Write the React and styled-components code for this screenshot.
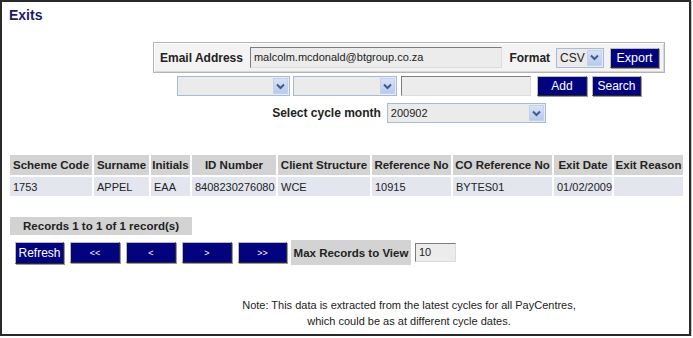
import styled, { createGlobalStyle } from "styled-components";

const GlobalStyle = createGlobalStyle`
  html, body {
    margin: 0;
    padding: 0;
    background: #ffffff;
    font-family: "Liberation Sans", Arial, sans-serif;
  }
`;

const Frame = styled.div`
  width: 687px;
  height: 332px;
  border: 2px solid #2a2a2a;
  background: #ffffff;
  box-shadow: 1px 1px 0 #c8c8c8;
  overflow: hidden;
`;

const Title = styled.h1`
  margin: 0;
  padding: 5px 7px 0;
  font-size: 14px;
  line-height: 16px;
  font-weight: bold;
  color: #1d1a6e;
`;

const FormArea = styled.div`
  margin: 19px 0 0 151px;
  width: 512px;
  display: flex;
  flex-direction: column;
  align-items: center;
`;

const EmailPanel = styled.div`
  box-sizing: border-box;
  width: 512px;
  height: 31px;
  display: flex;
  align-items: center;
  padding: 0 5px 0 6px;
  background: #f3f3f3;
  border: 1px solid #b4b4b4;
  box-shadow: inset 1px 1px 0 #ffffff, inset -1px -1px 0 #d8d8d8;
`;

const Label = styled.span`
  font-size: 12px;
  font-weight: bold;
  color: #222;
  white-space: nowrap;
  margin-right: ${(p) => p.$gap || 6}px;
`;

const TextInput = styled.div`
  box-sizing: border-box;
  width: ${(p) => p.$w}px;
  height: ${(p) => p.$h || 21}px;
  background: #ececec;
  border: 1px solid;
  border-color: #7c7c7c #dcdcdc #dcdcdc #7c7c7c;
  font-size: 11px;
  line-height: ${(p) => (p.$h || 21) - 2}px;
  padding-left: 3px;
  color: #222;
  margin-right: ${(p) => p.$gap || 0}px;
`;

const SelectBox = styled.div`
  box-sizing: border-box;
  width: ${(p) => p.$w}px;
  height: 20px;
  display: flex;
  align-items: stretch;
  background: #ebebeb;
  border: 1px solid #a9bad6;
  margin-right: ${(p) => p.$gap || 0}px;
`;

const SelectValue = styled.div`
  flex: 1;
  font-size: ${(p) => p.$fs || 11}px;
  line-height: 18px;
  padding-left: 3px;
  color: #222;
`;

const SelectArrow = styled.div`
  width: 15px;
  margin: 1px;
  display: flex;
  align-items: center;
  justify-content: center;
  background: linear-gradient(#d6e2f7, #b7caee);
  border: 1px solid #c2d2ee;
  box-sizing: border-box;
`;

const NavyButton = styled.button`
  box-sizing: border-box;
  width: ${(p) => p.$w}px;
  height: ${(p) => p.$h || 20}px;
  margin-right: ${(p) => p.$gap || 0}px;
  padding: 0;
  background: #03037e;
  color: #ffffff;
  font-family: "Liberation Sans", Arial, sans-serif;
  font-size: ${(p) => p.$fs || 12}px;
  border: 1px solid;
  border-color: #b8b8c8 #2a2a2a #2a2a2a #b8b8c8;
  box-shadow: 1px 1px 0 #9a9a9a;
  cursor: pointer;
`;

const Row = styled.div`
  display: flex;
  align-items: center;
  margin-top: ${(p) => p.$top}px;
`;

const DataTable = styled.table`
  margin: 30px 0 0 6px;
  width: 677px;
  table-layout: fixed;
  border-collapse: separate;
  border-spacing: 2px;
  font-size: 11px;
  color: #222;
`;

const HeadCell = styled.th`
  width: ${(p) => p.$w}px;
  height: 20px;
  padding: 0;
  background: #d3d3d3;
  font-weight: bold;
  font-size: 11.5px;
  text-align: center;
  white-space: nowrap;
  overflow: hidden;
`;

const DataCell = styled.td`
  height: 19px;
  padding: 0 0 0 3px;
  background: #e3e6ee;
  text-align: left;
  white-space: nowrap;
`;

const GreyBox = styled.div`
  box-sizing: border-box;
  width: ${(p) => p.$w}px;
  height: ${(p) => p.$h}px;
  background: #d3d3d3;
  font-size: 11.5px;
  font-weight: bold;
  color: #222;
  display: flex;
  align-items: center;
  justify-content: center;
  margin-right: ${(p) => p.$gap || 0}px;
  white-space: nowrap;
`;

const RecordsBar = styled.div`
  margin: 19px 0 0 8px;
`;

const PagerRow = styled.div`
  display: flex;
  align-items: center;
  margin: 5px 0 0 13px;
`;

const Note = styled.p`
  margin: 32px 0 0 151px;
  width: 512px;
  text-align: center;
  font-size: 11px;
  line-height: 16px;
  color: #222;
`;

const Chevron = () => (
  <svg width="9" height="7" viewBox="0 0 9 7">
    <path d="M1 1.5 L4.5 5 L8 1.5" fill="none" stroke="#44598a" strokeWidth="2" />
  </svg>
);

function Select({ w, value, gap, fs }) {
  return (
    <SelectBox $w={w} $gap={gap}>
      <SelectValue $fs={fs}>{value}</SelectValue>
      <SelectArrow>
        <Chevron />
      </SelectArrow>
    </SelectBox>
  );
}

const columns = [
  { key: "scheme", label: "Scheme Code", w: 82 },
  { key: "surname", label: "Surname", w: 55 },
  { key: "initials", label: "Initials", w: 39 },
  { key: "id", label: "ID Number", w: 84 },
  { key: "structure", label: "Client Structure", w: 92 },
  { key: "ref", label: "Reference No", w: 79 },
  { key: "coref", label: "CO Reference No", w: 99 },
  { key: "date", label: "Exit Date", w: 58 },
  { key: "reason", label: "Exit Reason", w: 69 },
];

const rows = [
  {
    scheme: "1753",
    surname: "APPEL",
    initials: "EAA",
    id: "8408230276080",
    structure: "WCE",
    ref: "10915",
    coref: "BYTES01",
    date: "01/02/2009",
    reason: "",
  },
];

export default function App() {
  return (
    <>
      <GlobalStyle />
      <Frame>
        <Title>Exits</Title>

        <FormArea>
          <EmailPanel>
            <Label $gap={7}>Email Address</Label>
            <TextInput $w={258} $gap={7}>malcolm.mcdonald@btgroup.co.za</TextInput>
            <Label $gap={6}>Format</Label>
            <Select w={49} value="CSV" gap={6} fs={12} />
            <NavyButton $w={50} $fs={12.5}>Export</NavyButton>
          </EmailPanel>

          <Row $top={3}>
            <Select w={113} gap={3} />
            <Select w={104} gap={4} />
            <TextInput $w={130} $h={20} $gap={6} />
            <NavyButton $w={50} $gap={5}>Add</NavyButton>
            <NavyButton $w={49}>Search</NavyButton>
          </Row>

          <Row $top={7}>
            <Label $gap={6}>Select cycle month</Label>
            <Select w={159} value="200902" />
          </Row>
        </FormArea>

        <DataTable>
          <thead>
            <tr>
              {columns.map((c) => (
                <HeadCell key={c.key} $w={c.w}>
                  {c.label}
                </HeadCell>
              ))}
            </tr>
          </thead>
          <tbody>
            {rows.map((r) => (
              <tr key={r.id}>
                {columns.map((c) => (
                  <DataCell key={c.key}>{r[c.key]}</DataCell>
                ))}
              </tr>
            ))}
          </tbody>
        </DataTable>

        <RecordsBar>
          <GreyBox $w={182} $h={18}>Records 1 to 1 of 1 record(s)</GreyBox>
        </RecordsBar>

        <PagerRow>
          <NavyButton $w={49} $h={22} $gap={6}>Refresh</NavyButton>
          <NavyButton $w={50} $h={21} $gap={6} $fs={9}>&lt;&lt;</NavyButton>
          <NavyButton $w={50} $h={21} $gap={6} $fs={9}>&lt;</NavyButton>
          <NavyButton $w={50} $h={21} $gap={6} $fs={9}>&gt;</NavyButton>
          <NavyButton $w={49} $h={21} $gap={4} $fs={9}>&gt;&gt;</NavyButton>
          <GreyBox $w={120} $h={25} $gap={4}>Max Records to View</GreyBox>
          <TextInput $w={41} $h={19}>10</TextInput>
        </PagerRow>

        <Note>
          Note: This data is extracted from the latest cycles for all PayCentres,
          <br />
          which could be as at different cycle dates.
        </Note>
      </Frame>
    </>
  );
}
